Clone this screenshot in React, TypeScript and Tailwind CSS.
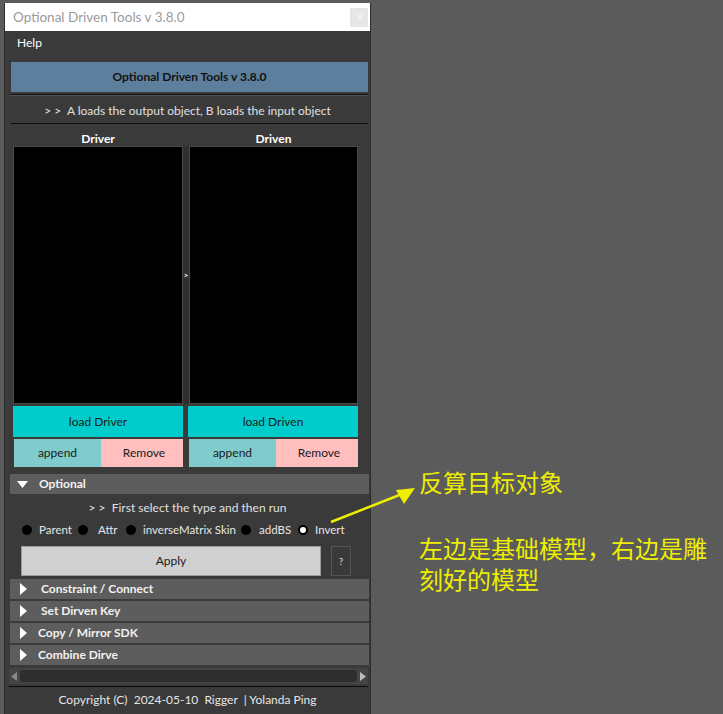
import React from "react";

const ui = { fontFamily: 'Lato, "Open Sans", sans-serif' };

function TriRight() {
  return (
    <svg width="7" height="12" viewBox="0 0 7 12" className="shrink-0">
      <polygon points="0,0 7,6 0,12" fill="#ffffff" />
    </svg>
  );
}

function TriDown() {
  return (
    <svg width="11" height="7" viewBox="0 0 11 7" className="shrink-0">
      <polygon points="0,0 11,0 5.5,7" fill="#ffffff" />
    </svg>
  );
}

function Frame({ label, indent }: { label: string; indent: string }) {
  return (
    <div className="h-[20px] bg-[#5d5d5d] flex items-center pl-[10px]">
      <TriRight />
      <span className={`${indent} text-[12px] font-bold text-[#f2f2f2]`}>{label}</span>
    </div>
  );
}

function Radio({ label, w, ml, on }: { label: string; w: string; ml: string; on?: boolean }) {
  return (
    <div className={`${w} flex items-center shrink-0`}>
      <div className="w-[10px] h-[10px] rounded-full bg-black flex items-center justify-center shrink-0">
        {on && <div className="w-[6px] h-[6px] rounded-full bg-white" />}
      </div>
      <span className={`${ml} text-[11.5px] text-[#e6e6e6] whitespace-nowrap`}>{label}</span>
    </div>
  );
}

export default function App() {
  return (
    <div className="relative w-[723px] h-[714px] bg-[#5b5b5b] overflow-hidden" style={ui}>
      <div className="pt-[3px] pl-[4px]">
        <div className="w-[367px] h-[711px] bg-[#3a3a3a] border-l border-r border-[#2c2c2c] flex flex-col">
          {/* title bar */}
          <div className="h-[28px] bg-white flex items-center justify-between pl-[8px] pr-[2px]">
            <span className="text-[13.5px] text-[#9a9a9a]">Optional Driven Tools v 3.8.0</span>
            <div className="w-[18px] h-[19px] bg-[#e6e6e6] flex items-center justify-center text-[11px] text-[#f4f4f4]">✕</div>
          </div>
          {/* menu */}
          <div className="h-[23px] flex items-center pl-[12px]">
            <span className="text-[12px] text-white">Help</span>
          </div>
          {/* banner */}
          <div className="mt-[8px] ml-[6px] mr-[2px] h-[30px] bg-[#5d7f9d] flex items-center justify-center">
            <span className="text-[12px] font-bold text-[#111]">Optional Driven Tools v 3.8.0</span>
          </div>
          <div className="mt-[2px] ml-[6px] mr-[2px] h-[1px] bg-[#111]" />
          <div className="ml-[6px] mr-[2px] h-[1px] bg-[#555]" />
          <div className="h-[27px] pt-[2px] flex items-center justify-center">
            <span className="text-[12px] text-[#e0e0e0]">&gt; &gt;&nbsp; A loads the output object, B loads the input object</span>
          </div>
          <div className="ml-[6px] mr-[2px] h-[1px] bg-[#0e0e0e]" />
          {/* headers */}
          <div className="mt-[6px] h-[16px] pt-[1px] flex pl-[8px]">
            <div className="w-[170px] flex justify-center items-center text-[12px] font-bold text-white">Driver</div>
            <div className="w-[6px]" />
            <div className="w-[169px] flex justify-center items-center text-[12px] font-bold text-white">Driven</div>
          </div>
          {/* lists */}
          <div className="h-[258px] flex pl-[8px]">
            <div className="w-[170px] bg-black border border-[#4a4a4a]" />
            <div className="w-[6px] bg-[#2f2f2f] flex items-center justify-center text-[8px] text-white font-bold">&gt;</div>
            <div className="w-[169px] bg-black border border-[#4a4a4a]" />
          </div>
          {/* load buttons */}
          <div className="mt-[2px] h-[31px] flex pl-[8px] gap-[5px]">
            <div className="w-[170px] bg-[#00cccc] flex items-center justify-center text-[12px] text-[#1a1a1a]">load Driver</div>
            <div className="w-[170px] bg-[#00cccc] flex items-center justify-center text-[12px] text-[#1a1a1a]">load Driven</div>
          </div>
          <div className="mt-[2px] h-[28px] flex pl-[9px]">
            <div className="w-[87px] bg-[#80cccc] flex items-center justify-center text-[12px] text-[#1a1a1a]">append</div>
            <div className="w-[82px] bg-[#ffbfbf] flex items-center justify-center text-[12px] text-[#1a1a1a] pl-[4px]">Remove</div>
            <div className="w-[6px]" />
            <div className="w-[87px] bg-[#80cccc] flex items-center justify-center text-[12px] text-[#1a1a1a]">append</div>
            <div className="w-[82px] bg-[#ffbfbf] flex items-center justify-center text-[12px] text-[#1a1a1a] pl-[4px]">Remove</div>
          </div>
          {/* optional */}
          <div className="mt-[7px] ml-[5px] mr-[1px] h-[20px] bg-[#5d5d5d] flex items-center pl-[7px]">
            <TriDown />
            <span className="ml-[11px] text-[12px] font-bold text-[#f2f2f2]">Optional</span>
          </div>
          <div className="mt-[5px] h-[18px] flex items-center justify-center">
            <span className="text-[12px] text-[#e0e0e0]">&gt; &gt;&nbsp; First select the type and then run</span>
          </div>
          <div className="mt-[4px] h-[17px] flex items-center pl-[17px]">
            <Radio label="Parent" w="w-[56px]" ml="ml-[7px]" />
            <Radio label="Attr" w="w-[48px]" ml="ml-[10px]" />
            <Radio label="inverseMatrix Skin" w="w-[115px]" ml="ml-[7px]" />
            <Radio label="addBS" w="w-[57px]" ml="ml-[8px]" />
            <Radio label="Invert" w="w-[60px]" ml="ml-[7px]" on />
          </div>
          <div className="mt-[8px] h-[30px] flex pl-[16px]">
            <div className="w-[300px] bg-[#d0d0d0] border border-[#9a9a9a] flex items-center justify-center text-[12px] text-[#1a1a1a]">Apply</div>
            <div className="ml-[10px] w-[20px] border border-[#555] flex items-center justify-center text-[10px] text-[#dddddd]">?</div>
          </div>
          {/* frames */}
          <div className="mt-[3px] ml-[5px] mr-[1px] flex flex-col gap-[2px]">
            <Frame label="Constraint / Connect" indent="ml-[14px]" />
            <Frame label="Set Dirven Key" indent="ml-[14px]" />
            <Frame label="Copy / Mirror SDK" indent="ml-[11px]" />
            <Frame label="Combine Dirve" indent="ml-[11px]" />
          </div>
          {/* scrollbar */}
          <div className="mt-[3px] ml-[4px] mr-[2px] h-[16px] bg-[#444] flex items-center px-[2px]">
            <svg width="6" height="9" viewBox="0 0 6 9"><polygon points="6,0 0,4.5 6,9" fill="#8a8a8a" /></svg>
            <div className="flex-1 mx-[3px] h-[12px] bg-[#2e2e2e] rounded-[3px]" />
            <svg width="6" height="9" viewBox="0 0 6 9"><polygon points="0,0 6,4.5 0,9" fill="#bdbdbd" /></svg>
          </div>
          <div className="mt-[2px] ml-[4px] mr-[2px] h-[1px] bg-[#0c0c0c]" />
          <div className="h-[26px] flex items-center justify-center">
            <span className="text-[12px] text-[#e6e6e6] whitespace-pre">Copyright (C)  2024-05-10  Rigger  | Yolanda Ping</span>
          </div>
        </div>
      </div>

      {/* annotation overlay */}
      <div
        className="absolute left-[419px] top-[467px] text-[24px] leading-[30px] text-[#eeee00]"
        style={{ fontFamily: '"Noto Sans CJK SC", sans-serif' }}
      >
        反算目标对象
      </div>
      <div
        className="absolute left-[419px] top-[532px] w-[300px] text-[24px] leading-[31px] text-[#eeee00]"
        style={{ fontFamily: '"Noto Sans CJK SC", sans-serif' }}
      >
        <div>左边是基础模型，右边是雕</div>
        <div>刻好的模型</div>
      </div>
      <svg className="absolute left-0 top-0 pointer-events-none" width="723" height="714">
        <line x1="331" y1="522" x2="402" y2="494" stroke="#eeee00" strokeWidth="2.5" />
        <polygon points="415,488 396,490 404,504" fill="#eeee00" />
      </svg>
    </div>
  );
}
